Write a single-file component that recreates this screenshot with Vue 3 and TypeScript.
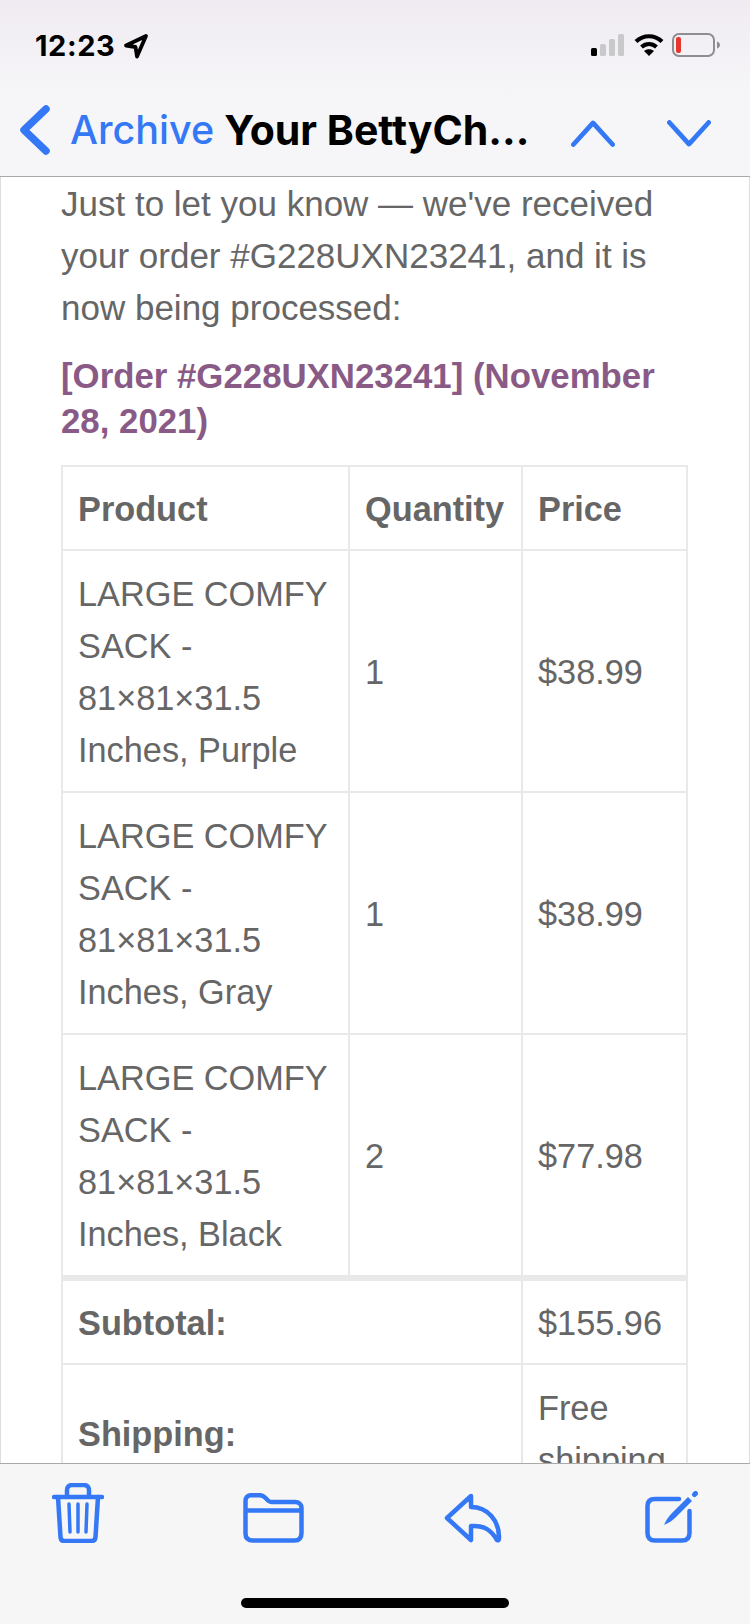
<script setup lang="ts">
interface Row { name: string[]; qty: number; price: string }
const rows: Row[] = [
  { name: ['LARGE COMFY', 'SACK -', '81×81×31.5', 'Inches, Purple'], qty: 1, price: '$38.99' },
  { name: ['LARGE COMFY', 'SACK -', '81×81×31.5', 'Inches, Gray'], qty: 1, price: '$38.99' },
  { name: ['LARGE COMFY', 'SACK -', '81×81×31.5', 'Inches, Black'], qty: 2, price: '$77.98' },
]
</script>

<template>
  <div class="phone">
    <header class="top">
      <div class="status">
        <div class="clock">
          <span>12:23</span>
          <svg class="loc" width="26" height="26" viewBox="0 0 26 26"><path d="M23 3 3 12.500l9.500 1.500 1.500 9.500z" fill="none" stroke="#000" stroke-width="3.800" stroke-linejoin="round"/></svg>
        </div>
        <div class="indicators">
          <svg width="34" height="22" viewBox="0 0 34 22"><rect x="0" y="14" width="6" height="8" rx="1.500" fill="#000"/><rect x="9" y="10" width="6" height="12" rx="1.500" fill="#c9c8cb"/><rect x="18" y="5" width="6" height="17" rx="1.500" fill="#c9c8cb"/><rect x="27" y="0" width="6" height="22" rx="1.500" fill="#c9c8cb"/></svg>
          <svg class="wifi" width="30" height="22" viewBox="0 0 30 22" fill="none" stroke="#000" stroke-width="4.200"><path d="M2 7.500c7.500-7 18.500-7 26 0"/><path d="M7.500 13c4.500-3.800 10.500-3.800 15 0"/><path d="M15 22l-5-5c2.800-2.400 7.200-2.400 10 0z" fill="#000" stroke="none"/></svg>
          <svg class="batt" width="48" height="24" viewBox="0 0 48 24"><rect x="1" y="1" width="41" height="22" rx="6" fill="none" stroke="#8e8d90" stroke-width="2"/><rect x="4" y="4" width="5" height="16" rx="2" fill="#e5372d"/><path d="M45 8.500c2 .6 3 2 3 3.500s-1 2.900-3 3.500z" fill="#8e8d90"/></svg>
        </div>
      </div>
      <nav class="nav">
        <svg class="back" width="32" height="50" viewBox="0 0 32 50" fill="none" stroke="#3478f6" stroke-width="7.500" stroke-linecap="round" stroke-linejoin="round"><path d="M27 4 5 25l22 21"/></svg>
        <span class="archive">Archive</span>
        <span class="title">Your BettyCh...</span>
        <svg class="chev up" width="44" height="27" viewBox="0 0 46 28" fill="none" stroke="#3478f6" stroke-width="5" stroke-linecap="round" stroke-linejoin="round"><path d="M2.500 25.500 23 3l20.500 22.500"/></svg>
        <svg class="chev down" width="44" height="27" viewBox="0 0 46 28" fill="none" stroke="#3478f6" stroke-width="5" stroke-linecap="round" stroke-linejoin="round"><path d="M2.500 2.500 23 25 43.500 2.500"/></svg>
      </nav>
    </header>

    <main class="body">
      <p class="intro">Just to let you know — we've received your order #G228UXN23241, and it is now being processed:</p>
      <h2 class="heading">[Order #G228UXN23241] (November 28, 2021)</h2>
      <table class="order">
        <colgroup><col class="c1" /><col class="c2" /><col class="c3" /></colgroup>
        <thead>
          <tr class="slim"><th>Product</th><th>Quantity</th><th>Price</th></tr>
        </thead>
        <tbody>
          <tr v-for="(r, i) in rows" :key="i">
            <td><div v-for="l in r.name" :key="l">{{ l }}</div></td>
            <td>{{ r.qty }}</td>
            <td>{{ r.price }}</td>
          </tr>
        </tbody>
        <tfoot>
          <tr class="first slim"><th colspan="2">Subtotal:</th><td>$155.96</td></tr>
          <tr><th colspan="2">Shipping:</th><td>Free shipping</td></tr>
        </tfoot>
      </table>
    </main>

    <footer class="bottom">
      <div class="tools">
        <svg width="52" height="60" viewBox="0 0 52 60" fill="none" stroke="#3478f6" stroke-width="4.500" stroke-linecap="round" stroke-linejoin="round">
          <path d="M2 14h48"/>
          <path d="M15 13V7c0-3 2-5 5-5h12c3 0 5 2 5 5v6"/>
          <path d="M6 14l2.500 40c.2 2.500 1.500 4 4 4h27c2.500 0 3.800-1.500 4-4L46 14"/>
          <path d="M17 21l1 28M26 21v28M35 21l-1 28" stroke-width="3.500"/>
        </svg>
        <svg width="61" height="50" viewBox="0 0 61 50" fill="none" stroke="#3478f6" stroke-width="4.500" stroke-linejoin="round">
          <path d="M2.500 16V8c0-3.500 2-5.800 5.500-5.800h9c2.500 0 3.500.8 5 2.300l3 3c1 1 2 1.500 3.500 1.500H52c4 0 6.500 2.300 6.500 6V40c0 5-2.500 7.500-7 7.500H10c-5 0-7.500-2.500-7.500-7z"/>
          <path d="M2.500 17.500h56"/>
        </svg>
        <svg class="reply" width="58" height="50" viewBox="0 0 58 50" fill="none" stroke="#3478f6" stroke-width="4.500" stroke-linejoin="round">
          <path d="M27 3 3 25l24 22V33c13-1 20 4 26 14 2 1 2-1 2-3C55 28 44 14 27 14z"/>
        </svg>
        <svg width="53" height="52" viewBox="0 0 53 52" fill="none" stroke="#3478f6" stroke-width="4.500" stroke-linecap="round" stroke-linejoin="round">
          <path d="M34 8H10c-5 0-7.500 2.500-7.500 7v27c0 5 2.500 7.500 7.500 7.500h27c5 0 7.500-2.500 7.500-7.500V20"/>
          <path d="M19 34c2-5 5-9 8-12L43 6l4 4-16 16c-3 3-7 6-12 8z" fill="#3478f6" stroke="none"/>
          <path d="M49.500 3.500l1-1" stroke-width="5"/>
        </svg>
      </div>
      <div class="home"></div>
    </footer>
  </div>
</template>

<style scoped>
.phone {
  width: 750px;
  height: 1624px;
  display: flex;
  flex-direction: column;
  overflow: hidden;
  background: #fff;
  font-family: "Liberation Sans", Arial, sans-serif;
}
.top {
  height: 177px;
  flex: none;
  box-sizing: border-box;
  background: linear-gradient(#f0ebf2, #f6f6f8 55%);
  border-bottom: 1px solid #aaa;
}
.status {
  height: 90px;
  box-sizing: border-box;
  padding: 33px 30px 0 35px;
  display: flex;
  justify-content: space-between;
  align-items: flex-start;
}
.clock {
  display: flex;
  align-items: center;
  gap: 8px;
  font-family: Inter, sans-serif;
  font-weight: 700;
  font-size: 29px;
  letter-spacing: 0.6px;
  line-height: 24px;
  color: #000;
}
.indicators { display: flex; align-items: center; gap: 9px; }
.batt { margin-left: -1px; }
.nav {
  display: flex;
  align-items: center;
  height: 50px;
  margin-top: 15px;
  padding: 0 39px 0 19px;
}
.archive {
  margin-left: 19px;
  font-family: Inter, sans-serif;
  font-size: 39.5px;
  font-weight: 500;
  color: #3478f6;
}
.title {
  margin-left: 10px;
  font-family: Inter, sans-serif;
  font-size: 41px;
  font-weight: 700;
  color: #000;
  white-space: nowrap;
}
.chev { margin-top: 6px; }
.chev.up { margin-left: auto; }
.chev.down { margin-left: 52px; }
.body {
  flex: 1;
  min-height: 0;
  overflow: hidden;
  box-sizing: border-box;
  padding: 0 60px;
  color: #666;
  border-left: 1px solid #ddd;
  border-right: 1px solid #ddd;
}
.intro {
  margin: 1px 0 0;
  font-size: 35px;
  line-height: 52px;
}
.heading {
  margin: 19px 0 22px;
  font-size: 34.8px;
  line-height: 45px;
  font-weight: 700;
  color: #8a5a86;
}
.order {
  width: 625px;
  border-collapse: collapse;
  table-layout: fixed;
  border: 2px solid #e9e9e9;
  font-size: 34.3px;
  line-height: 52px;
}
.c1 { width: 287px; }
.c2 { width: 173px; }
.c3 { width: 165px; }
th, td {
  border: 2px solid #e9e9e9;
  padding: 17px 15px 15px;
  text-align: left;
  vertical-align: middle;
  font-weight: 400;
}
th { font-weight: 700; }
.slim th, .slim td { padding-top: 16px; padding-bottom: 14px; }
.first th, .first td { border-top-width: 6px; }
.bottom {
  height: 161px;
  flex: none;
  box-sizing: border-box;
  background: #f6f6f7;
  border-top: 1px solid #aaa;
  display: flex;
  flex-direction: column;
}
.tools {
  display: flex;
  justify-content: space-between;
  align-items: flex-end;
  height: 79px;
  padding: 0 52px;
}
.reply { margin-right: 4px; }
.home {
  width: 268px;
  height: 10px;
  border-radius: 5px;
  background: #000;
  margin: 55px auto 0;
}
</style>
